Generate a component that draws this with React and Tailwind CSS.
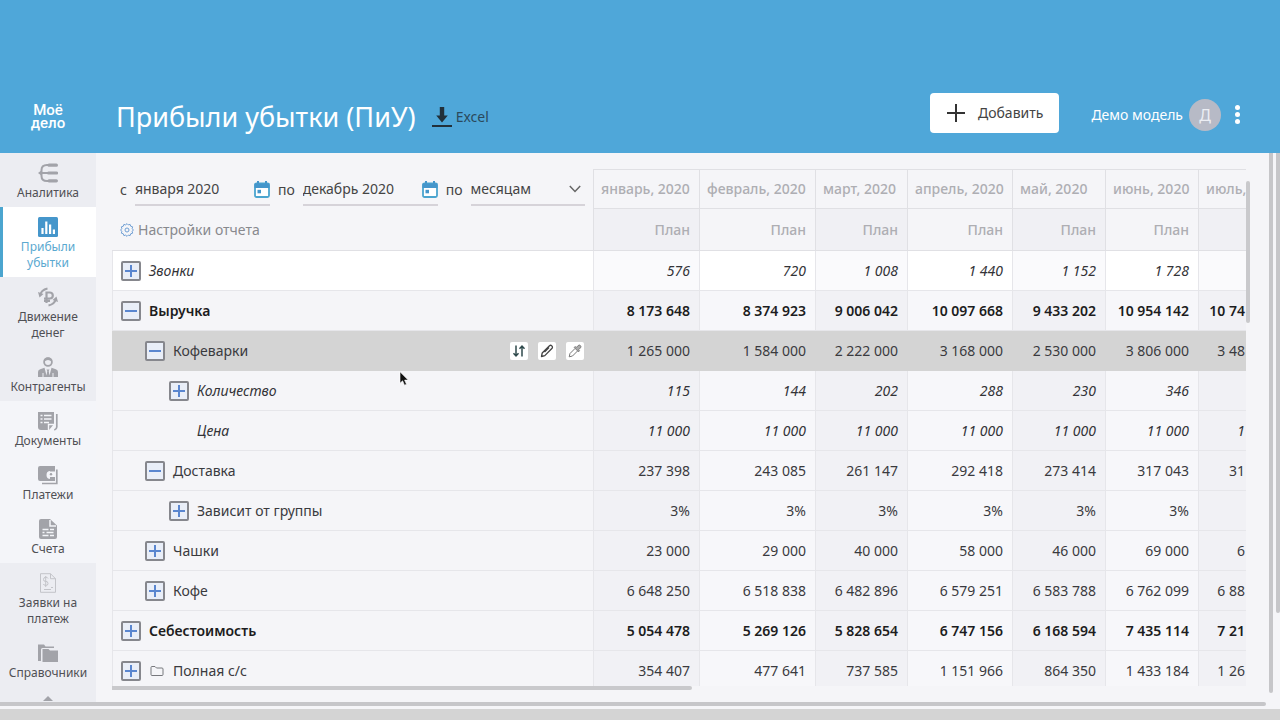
import React, { useState } from 'react';

const menu = [
  { id: 'analytics', lines: ['Аналитика'], tone: 'dark' },
  { id: 'profit', lines: ['Прибыли', 'убытки'], tone: 'active' },
  { id: 'cash', lines: ['Движение', 'денег'], tone: 'dark' },
  { id: 'partners', lines: ['Контрагенты'], tone: 'dark' },
  { id: 'docs', lines: ['Документы'], tone: 'light' },
  { id: 'payments', lines: ['Платежи'], tone: 'light' },
  { id: 'bills', lines: ['Счета'], tone: 'light' },
  { id: 'requests', lines: ['Заявки на', 'платеж'], tone: 'dark' },
  { id: 'dictionaries', lines: ['Справочники'], tone: 'dark' },
];

const tones = {
  dark: 'bg-[#ecedf2] border-[#ecedf2] text-[#505055]',
  light: 'bg-[#f4f5f9] border-[#f4f5f9] text-[#505055]',
  active: 'bg-white border-[#4ba5cf] text-[#5ba9d0]',
};

const months = ['январь, 2020', 'февраль, 2020', 'март, 2020', 'апрель, 2020', 'май, 2020', 'июнь, 2020'];

// The last value of each row belongs to the column that is cut off at the right edge
const rows = [
  { name: 'Звонки', level: 0, toggle: 'plus', style: 'italic', values: ['576', '720', '1 008', '1 440', '1 152', '1 728', ''] },
  { name: 'Выручка', level: 0, toggle: 'minus', style: 'bold', values: ['8 173 648', '8 374 923', '9 006 042', '10 097 668', '9 433 202', '10 954 142', '10 74'] },
  { name: 'Кофеварки', level: 1, toggle: 'minus', style: 'normal', active: true, values: ['1 265 000', '1 584 000', '2 222 000', '3 168 000', '2 530 000', '3 806 000', '3 48'] },
  { name: 'Количество', level: 2, toggle: 'plus', style: 'italic', values: ['115', '144', '202', '288', '230', '346', ''] },
  { name: 'Цена', level: 2, style: 'italic', values: ['11 000', '11 000', '11 000', '11 000', '11 000', '11 000', '1'] },
  { name: 'Доставка', level: 1, toggle: 'minus', style: 'normal', values: ['237 398', '243 085', '261 147', '292 418', '273 414', '317 043', '31'] },
  { name: 'Зависит от группы', level: 2, toggle: 'plus', style: 'normal', values: ['3%', '3%', '3%', '3%', '3%', '3%', ''] },
  { name: 'Чашки', level: 1, toggle: 'plus', style: 'normal', values: ['23 000', '29 000', '40 000', '58 000', '46 000', '69 000', '6'] },
  { name: 'Кофе', level: 1, toggle: 'plus', style: 'normal', values: ['6 648 250', '6 518 838', '6 482 896', '6 579 251', '6 583 788', '6 762 099', '6 88'] },
  { name: 'Себестоимость', level: 0, toggle: 'plus', style: 'bold', values: ['5 054 478', '5 269 126', '5 828 654', '6 747 156', '6 168 594', '7 435 114', '7 21'] },
  { name: 'Полная с/с', level: 0, toggle: 'plus', style: 'normal', folder: true, values: ['354 407', '477 641', '737 585', '1 151 966', '864 350', '1 433 184', '1 26'] },
];

const textStyles = {
  italic: 'italic text-[#333337]',
  bold: 'font-semibold text-[#1c1c20]',
  normal: 'text-[#3a3a3e]',
};

const indents = ['pl-2', 'pl-8', 'pl-14'];

const MenuIcon = ({ id }) => (
  <svg width="20" height="20" viewBox="0 0 20 20" fill="currentColor" aria-hidden="true">
    {id === 'analytics' && (
      <g fill="none" stroke="currentColor" strokeLinecap="round">
        <path d="M11 2H9Q3.500 2 3.500 7v6q0 5 5.500 5h2M3 10h8" strokeWidth="2" />
        <path d="M11 2.200h7.400M10.500 10h8M11 17.800h7.400" strokeWidth="3.200" />
        <path d="M0 10l4-3v6z" fill="currentColor" stroke="none" />
      </g>
    )}
    {id === 'profit' && (
      <>
        <rect width="20" height="20" rx="1.500" fill="#4596cb" />
        <path d="M4.500 17v-6M8.300 17V4.500M12.100 17V7.500M15.900 17v-4.500" stroke="#fff" strokeWidth="2.200" />
      </>
    )}
    {id === 'cash' && (
      <g fill="none" stroke="currentColor">
        <path d="M2 8.500Q3 3 9.500 1.500M18 11.500Q17 17 10.500 18.500" strokeWidth="1.800" />
        <path d="M0 5l1.500 5.500L5.500 7zM20 15l-1.500-5.500L14.500 13z" fill="currentColor" stroke="none" />
        <path d="M8.500 16V5.500h3.300a3 3 0 0 1 0 6H6M6 13.800h6" strokeWidth="2.200" />
      </g>
    )}
    {id === 'partners' && (
      <>
        <circle cx="10" cy="5" r="3.900" fill="none" stroke="currentColor" strokeWidth="1.800" />
        <path d="M6.200 4.500q3.800-3 7.600 0l-.4-2.500Q10-.8 6.600 2z" />
        <path d="M0 20v-5q0-2 2.200-2.800L6.500 10.800l2 7.700.8-4.500-.8-1.500h3l-.8 1.500.8 4.500 2-7.700 4.300 1.400Q20 13 20 15v5z" />
        <path d="M5 20v-4M15 20v-4" stroke="#ecedf2" />
      </>
    )}
    {id === 'docs' && (
      <>
        <path d="M0 1h16v12l-5 6H3q-3 0-3-3z" />
        <path d="M18.800 3v13q0 2-2.500 3" fill="none" stroke="currentColor" strokeWidth="1.700" />
        <path d="M2.500 4.500h2M6 4.500h7.500M2.500 8h2M6 8h7.500M2.500 11.500h2M6 11.500h5M10.500 19v-5.500H16" fill="none" stroke="#f4f5f9" strokeWidth="1.400" />
      </>
    )}
    {id === 'payments' && (
      <>
        <path d="M2 1h15v5h-4.500a4 4 0 0 0 0 8H17v2H2q-2 0-2-2V3q0-2 2-2z" />
        <path d="M12 5h5v10h-5z" />
        <path d="M18.800 4.500v14H4" fill="none" stroke="currentColor" strokeWidth="1.700" />
        <path d="M12 6.500h5v5.500h-5a2.750 2.750 0 0 1 0-5.500z" fill="#f4f5f9" />
        <circle cx="13" cy="9.200" r="1.200" />
      </>
    )}
    {id === 'bills' && (
      <>
        <path d="M3 0h9l7 6.500V18q0 2-2 2H3q-2 0-2-2V2q0-2 2-2z" />
        <path d="M12 1v6h6M4.500 10.500h6M12 10.500h4M4.500 13.500h2M8.500 13.500h7M4.500 16.500h6M12 16.500h4" fill="none" stroke="#f4f5f9" strokeWidth="1.500" />
      </>
    )}
    {id === 'requests' && (
      <g fill="none" stroke="currentColor">
        <path d="M2.500.7h10l5 5v13.600h-15zM12.500.7v5h5" />
        <path d="M10 5.500Q9.500 4 7.500 4.200T5.500 6.500 7.700 8.400 10 10.400 7.800 12.400 5.300 11M7.700 3v11M6 16.500h7M13 14.500h2" />
      </g>
    )}
    {id === 'dictionaries' && (
      <>
        <path d="M0 1.500h6l1.500 2H16V5H4.500q-1.500 0-1.500 1.500V18H0z" />
        <path d="M4.500 6h6L12 7.500h8V19H4.500z" />
      </>
    )}
  </svg>
);

const CalendarIcon = () => (
  <svg width="16" height="17" viewBox="0 0 16 17" className="shrink-0" aria-hidden="true">
    <rect x="1" y="2.500" width="14" height="13.500" rx="1.500" fill="#fff" stroke="#4ba5cf" strokeWidth="1.800" />
    <path d="M.5 2.500h15V7H.5z" fill="#4596cb" />
    <path d="M4 0v4M12 0v4" stroke="#4596cb" strokeWidth="2" />
    <rect x="3.500" y="8.800" width="3.500" height="3.500" fill="#4596cb" />
  </svg>
);

const Toggle = ({ kind, name, onClick }) => (
  <button
    type="button"
    aria-label={name}
    onClick={onClick}
    className="flex size-5 shrink-0 items-center justify-center rounded-xs border-2 border-[#86878d] bg-[#e9eef8]"
  >
    <svg width="14" height="14" viewBox="0 0 14 14" stroke="#5a86cf" strokeWidth="2" aria-hidden="true">
      <path d={kind === 'plus' ? 'M1 7h12M7 1v12' : 'M1 7h12'} />
    </svg>
  </button>
);

const RowActions = () => (
  <div className="ml-auto flex gap-2.5 pr-[9px]">
    <button type="button" aria-label="Переместить" className="flex size-[18px] items-center justify-center rounded-xs bg-white">
      <svg width="14" height="14" viewBox="0 0 14 14" fill="none" stroke="#2f4a4c" strokeWidth="1.500" aria-hidden="true">
        <path d="M4 1.500v10.500M1.500 9.300L4 12l2.500-2.700M10 12.500V2M7.500 4.700L10 2l2.500 2.700" />
      </svg>
    </button>
    <button type="button" aria-label="Изменить" className="flex size-[18px] items-center justify-center rounded-xs bg-white">
      <svg width="14" height="14" viewBox="0 0 14 14" fill="none" stroke="#444" strokeWidth="1.300" strokeLinejoin="round" aria-hidden="true">
        <path d="M1.500 12.500l.7-3.500 7.300-7.300q1.200-.9 2.300.2t.3 2.300L4.800 11.600zM9 3.500L4.500 8" />
      </svg>
    </button>
    <button type="button" aria-label="Выбрать цвет" className="flex size-[18px] items-center justify-center rounded-xs bg-white">
      <svg width="14" height="14" viewBox="0 0 14 14" fill="none" stroke="#777" strokeLinejoin="round" aria-hidden="true">
        <path d="M7 4.500l-5 5-.8 3.300 3.300-.8 5-5" />
        <path d="M6.300 3.600l4.200 4.200 1-1-1-1 2-2q.9-1.200-.1-2.200t-2.200-.1l-2 2-1-1z" fill="#aaa" />
      </svg>
    </button>
  </div>
);

const Header = () => (
  <header className="flex h-[153px] shrink-0 items-center bg-[#4fa7d9] pt-20 text-white">
    <a href="#" className="flex w-24 flex-col items-center font-['Roboto','Open_Sans',sans-serif] text-[15px] leading-[13px] font-medium">
      <span>Моё</span>
      <span>дело</span>
    </a>
    <h1 className="ml-5 text-[27px] leading-8">Прибыли убытки (ПиУ)</h1>
    <button type="button" className="ml-4 flex items-center gap-1 text-sm text-[#2b4a5c]">
      <svg width="20" height="20" viewBox="0 0 20 20" fill="#22303a" aria-hidden="true">
        <path d="M7.800 0h4.400v8.500h3.600L10 15.500 4.200 8.500h3.600z" />
        <path d="M0 18h20v2H0z" />
      </svg>
      Excel
    </button>
    <button type="button" className="mr-8 mb-2 ml-auto flex h-10 items-center gap-3 rounded bg-white px-4 text-sm text-[#444]">
      <svg width="20" height="20" viewBox="0 0 20 20" stroke="#333" strokeWidth="2" aria-hidden="true">
        <path d="M1 10h18M10 1v18" />
      </svg>
      Добавить
    </button>
    <div className="mr-10 mb-1 flex items-center gap-1.5 text-sm">
      Демо модель
      <span className="flex size-8 items-center justify-center rounded-full bg-[#b7bac6] text-base text-[#eceef4]">Д</span>
      <button type="button" aria-label="Меню" className="ml-2 flex flex-col gap-0.5">
        <span className="size-[5px] rounded-full bg-white" />
        <span className="size-[5px] rounded-full bg-white" />
        <span className="size-[5px] rounded-full bg-white" />
      </button>
    </div>
  </header>
);

const Sidebar = () => (
  <nav className="w-24 shrink-0 overflow-hidden bg-[#ecedf2] text-xs leading-4">
    {menu.map((item) => (
      <a
        key={item.id}
        href={'#' + item.id}
        className={'flex flex-col items-center gap-0.5 border-l-[3px] pt-2.5 pr-[3px] pb-1.5 ' + tones[item.tone]}
      >
        <span className={item.id === 'requests' ? 'text-[#c3c4c9]' : 'text-[#a2a3a9]'}>
          <MenuIcon id={item.id} />
        </span>
        <span className="text-center whitespace-nowrap">
          {item.lines[0]}
          {item.lines[1] && <br />}
          {item.lines[1]}
        </span>
      </a>
    ))}
    <svg width="96" height="15" viewBox="0 0 96 15" fill="#a2a3a9" aria-hidden="true">
      <path d="M43 14l5-5 5 5z" />
    </svg>
  </nav>
);

const DateField = ({ id, label, value, onChange }) => (
  <>
    <label htmlFor={id}>{label}</label>
    <span className="flex h-8 w-[135px] items-center border-b-2 border-[#d6d3d9]">
      <input id={id} value={value} onChange={onChange} className="w-full min-w-0 outline-none" />
      <CalendarIcon />
    </span>
  </>
);

const Filters = () => {
  const [from, setFrom] = useState('января 2020');
  const [to, setTo] = useState('декабрь 2020');

  return (
    <div className="flex h-full flex-col pl-2 text-sm font-normal text-[#444]">
      <div className="flex h-[42px] items-center gap-2">
        <DateField id="from" label="с" value={from} onChange={(e) => setFrom(e.target.value)} />
        <DateField id="to" label="по" value={to} onChange={(e) => setTo(e.target.value)} />
        <label htmlFor="step">по</label>
        <span className="flex h-8 w-[114px] items-center border-b-2 border-[#d6d3d9]">
          <select id="step" className="w-full appearance-none outline-none">
            <option>месяцам</option>
          </select>
          <svg width="12" height="8" viewBox="0 0 12 8" fill="none" stroke="#666" strokeWidth="1.500" className="mr-1 shrink-0" aria-hidden="true">
            <path d="M.8 1L6 6.500 11.200 1" />
          </svg>
        </span>
      </div>
      <button type="button" className="flex h-[38px] items-center gap-1 text-[#88898e]">
        <svg width="14" height="14" viewBox="0 0 14 14" fill="none" stroke="#6f9fd4" aria-hidden="true">
          <path d="M7 .6l1.300 1.300 1.800-.5.600 1.800 1.900.6-.4 1.900L13.400 7l-1.200 1.300.4 1.900-1.900.6-.6 1.800-1.800-.5L7 13.400l-1.300-1.300-1.800.5-.6-1.800-1.900-.6.400-1.900L.6 7l1.200-1.300-.4-1.900 1.900-.6.600-1.800 1.800.5z" />
          <circle cx="7" cy="7" r="2" />
        </svg>
        Настройки отчета
      </button>
    </div>
  );
};

// Odd month columns are a bit darker than the even ones
const cellColor = (row, first, i) => {
  if (row.active) return 'bg-[#d4d4d4] border-[#d4d4d4]';
  if (first) return i % 2 ? 'bg-white border-[#e6e6ea]' : 'bg-[#fafafc] border-[#e6e6ea]';
  return i % 2 ? 'bg-[#f7f7fa] border-[#e6e6ea]' : 'bg-[#f1f1f5] border-[#e6e6ea]';
};

const Report = () => {
  const [closed, setClosed] = useState({});

  const toggle = (row) => {
    setClosed({ ...closed, [row.name]: !closed[row.name] });
  };

  return (
    <table className="w-full table-fixed border-separate border-spacing-0 text-sm whitespace-nowrap">
      <colgroup>
        <col className="w-[481px]" />
        <col className="w-[106px]" />
        <col className="w-[116px]" />
        <col className="w-[92px]" />
        <col className="w-[105px]" />
        <col className="w-[93px]" />
        <col className="w-[93px]" />
        <col />
      </colgroup>
      <thead className="text-[#aeaeb3]">
        <tr>
          <th rowSpan={2} className="border-b border-[#e0e0e4] p-0 align-top">
            <Filters />
          </th>
          {months.map((month) => (
            <th key={month} className="h-10 border-t border-b border-l border-[#e0e0e4] px-[7px] py-0 text-left font-medium">
              {month}
            </th>
          ))}
          <th className="h-10 border-t border-b border-l border-[#e0e0e4] py-0 pr-0 pl-[7px] text-left font-medium">июль,</th>
        </tr>
        <tr>
          {months.map((month, i) => (
            <th
              key={month}
              className={'h-[42px] border-b border-l border-[#e0e0e4] px-[9px] py-0 text-right font-medium ' + (i % 2 ? '' : 'bg-[#f0f0f4]')}
            >
              План
            </th>
          ))}
          <th className="border-b border-l border-[#e0e0e4] bg-[#f0f0f4]" />
        </tr>
      </thead>
      <tbody>
        {rows.map((row, index) => (
          <tr key={row.name} className={textStyles[row.style]}>
            <td
              className={
                'h-10 border-b border-l py-0 pr-0 ' +
                indents[row.level] +
                (row.active ? ' relative border-[#d4d4d4] bg-[#d4d4d4]' : ' border-[#e6e6ea]') +
                (index === 0 ? ' bg-white' : '')
              }
            >
              <div className="flex items-center gap-2">
                {row.toggle ? (
                  <Toggle kind={closed[row.name] ? 'plus' : row.toggle} name={row.name} onClick={() => toggle(row)} />
                ) : (
                  <span className="size-5" />
                )}
                {row.folder && (
                  <svg width="16" height="12" viewBox="0 0 16 12" fill="none" stroke="#77787d" aria-hidden="true">
                    <path d="M2 2.500q0-1 1-1h3l1.500 1.500H13q1 0 1 1v5.500q0 1-1 1H3q-1 0-1-1z" />
                  </svg>
                )}
                {row.name}
                {row.active && <RowActions />}
              </div>
              {row.active && (
                <svg width="10" height="15" viewBox="0 0 10 15" className="absolute top-10 left-[286px]" aria-hidden="true">
                  <path d="M1 .8v11.400l2.600-2.400 1.900 4.400 2-.9-1.900-4.200h3.600z" fill="#111" stroke="#fff" strokeWidth=".6" />
                </svg>
              )}
            </td>
            {row.values.map((value, i) => (
              <td
                key={i}
                className={'border-b border-l py-0 text-right ' + (i === 6 ? 'px-px ' : 'px-[9px] ') + cellColor(row, index === 0, i)}
              >
                {value}
              </td>
            ))}
          </tr>
        ))}
      </tbody>
    </table>
  );
};

const App = () => {
  return (
    <div className="flex h-screen flex-col overflow-hidden bg-[#f5f5f8] font-['Noto_Sans','Open_Sans',sans-serif]">
      <Header />
      <div className="flex min-h-0 flex-1">
        <div className="flex min-w-0 flex-1 flex-col">
          <div className="flex min-h-0 flex-1">
            <Sidebar />
            <main className="flex min-w-0 flex-1 flex-col pt-4 pr-[19px] pb-3 pl-4">
              <div className="flex min-h-0 flex-1">
                <div className="min-w-0 flex-1 overflow-hidden">
                  <Report />
                </div>
                <div className="w-1 pt-3">
                  <div className="h-[142px] rounded-full bg-[#c9c9cc]" />
                </div>
              </div>
              <div className="h-1 w-[51%] rounded-r-full bg-[#c9c9cc]" />
            </main>
          </div>
          <div className="mr-[3px] mb-[3px] h-1 rounded-r-full bg-[#c6c6c9]" />
        </div>
        <div className="mb-4 w-1 rounded-b-full bg-[#c6c6c9]" />
        <div className="mb-24 ml-[3px] w-1 rounded-b-full bg-[#c6c6c9]" />
      </div>
      <footer className="h-[11px] shrink-0 bg-[#d4d4d4]" />
    </div>
  );
};

export default App;
